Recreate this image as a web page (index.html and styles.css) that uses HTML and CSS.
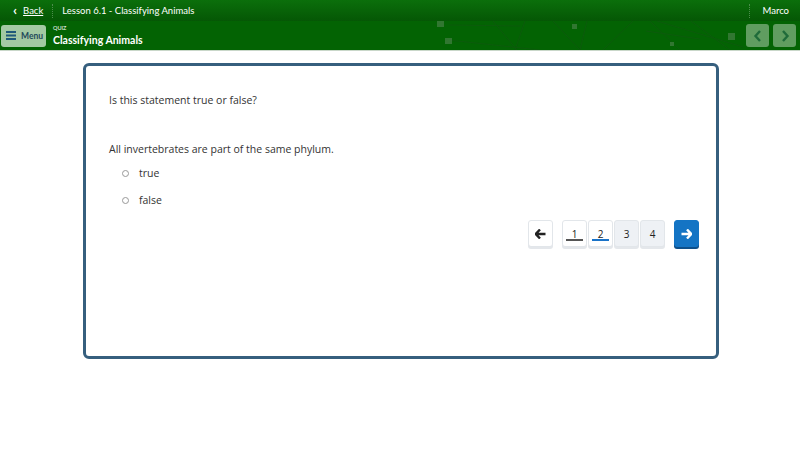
FILE: index.html
```html
<!DOCTYPE html>
<html>
<head>
<meta charset="utf-8">
<link rel="stylesheet" href="styles.css">
</head>
<body>
<header class="topbar">
  <a class="back" href="#"><span class="chev">&#8249;</span><span class="back-text">Back</span></a>
  <span class="sep"></span>
  <span class="lesson">Lesson 6.1 - Classifying Animals</span>
  <span class="spacer"></span>
  <span class="sep"></span>
  <span class="user">Marco</span>
</header>
<div class="subbar">
  <svg class="bg-lines" width="800" height="29" viewBox="0 0 800 29">
    <g stroke="#0f5a0f" stroke-width="1" fill="none" opacity="0.8">
      <path d="M493 0 L517 29"/><path d="M525 0 L515 29"/><path d="M553 0 L580 29"/>
      <path d="M587 0 L580 29"/><path d="M633 0 L603 29"/><path d="M650 0 L680 29"/>
      <path d="M646 10 L700 18"/><path d="M657 0 L743 26"/><path d="M691 0 L730 29"/>
      <path d="M448 19 L540 29"/><path d="M450 4 L520 5"/>
    </g>
    <g fill="#3d7d3d" opacity="0.8">
      <rect x="437" y="0" width="7" height="6"/><rect x="445" y="17" width="7" height="6"/>
      <rect x="572" y="3" width="5" height="5"/><rect x="728" y="12" width="7" height="7"/>
      <rect x="670" y="21" width="4" height="4"/>
    </g>
  </svg>
  <button class="menu-btn"><svg width="10" height="9" viewBox="0 0 10 9"><rect x="0" y="0" width="10" height="2" fill="#1f5a7a"/><rect x="0" y="3.5" width="10" height="2" fill="#1f5a7a"/><rect x="0" y="7" width="10" height="2" fill="#1f5a7a"/></svg><span>Menu</span></button>
  <div class="title-block">
    <div class="quiz-label">QUIZ</div>
    <div class="quiz-title">Classifying Animals</div>
  </div>
  <span class="spacer"></span>
  <div class="navs">
    <button class="nav-btn"><svg width="10" height="12" viewBox="0 0 10 12"><path d="M7 1 L2.5 6 L7 11" stroke="#1f6b3a" stroke-width="2.4" fill="none"/></svg></button>
    <button class="nav-btn"><svg width="10" height="12" viewBox="0 0 10 12"><path d="M3 1 L7.5 6 L3 11" stroke="#1f6b3a" stroke-width="2.4" fill="none"/></svg></button>
  </div>
</div>
<main class="content">
  <section class="card">
    <p class="question">Is this statement true or false?</p>
    <p class="statement">All invertebrates are part of the same phylum.</p>
    <ul class="options">
      <li><span class="radio"></span>true</li>
      <li><span class="radio"></span>false</li>
    </ul>
    <div class="pager">
      <button class="pbtn arrow"><svg width="11" height="10" viewBox="0 0 11 10"><path d="M5 0.5 L0.8 5 L5 9.5 M1.2 5 L10.5 5" stroke="#222" stroke-width="2.4" fill="none"/></svg></button>
      <div class="pages">
        <button class="pbtn page done">1</button>
        <button class="pbtn page current">2</button>
        <button class="pbtn page">3</button>
        <button class="pbtn page">4</button>
      </div>
      <button class="pbtn next"><svg width="11" height="10" viewBox="0 0 11 10"><path d="M6 0.5 L10.2 5 L6 9.5 M9.8 5 L0.5 5" stroke="#fff" stroke-width="2.4" fill="none"/></svg></button>
    </div>
  </section>
</main>
</body>
</html>
```
FILE: styles.css
```css
* { box-sizing: border-box; }
html, body { margin: 0; padding: 0; }
body {
  width: 800px; height: 450px; background: #fff; overflow: hidden;
  font-family: "Lato", "Noto Sans", sans-serif; color: #333;
}
button { font-family: inherit; cursor: pointer; }
.topbar {
  height: 21px; display: flex; align-items: center;
  background: linear-gradient(#0b6f0b, #055705);
  color: #fff; font-size: 9.5px;
}
.back { display: flex; align-items: center; color: #fff; margin-left: 13px; text-decoration: none; }
.chev { font-size: 14px; font-weight: 700; margin-right: 6px; line-height: 1; margin-top: -2px; }
.back-text { text-decoration: underline; }
.sep { width: 0; height: 14px; border-left: 1px dotted #4c8d4c; margin: 0 9px; }
.spacer { flex: 1; }
.user { margin-right: 11px; margin-left: 3px; }
.subbar {
  position: relative; height: 30px; background: #036303;
  display: flex; align-items: center; border-bottom: 1px solid #c9d7c9;
}
.bg-lines { position: absolute; left: 0; top: 0; }
.menu-btn {
  position: relative; display: flex; align-items: center; gap: 5px;
  margin-left: 1px; width: 45px; height: 22px; padding: 0 0 0 5px;
  background: #a3c9a3; border: none; border-radius: 3px;
  font-size: 8.5px; font-weight: 700; color: #1f4a5a;
}
.title-block { position: relative; margin-left: 7px; color: #fff; line-height: 1; }
.quiz-label { font-size: 5.5px; margin-bottom: 3px; }
.quiz-title { font-size: 10.5px; font-weight: 700; }
.navs { position: relative; display: flex; gap: 4px; margin-right: 4px; }
.nav-btn {
  width: 23px; height: 23px; border: none; border-radius: 3px;
  background: rgba(190, 215, 190, 0.5); display: flex; align-items: center; justify-content: center; padding: 0;
}
.content { padding: 12px 0 0 83px; }
.card {
  width: 636px; height: 296px; border: 3px solid #365f7e; border-radius: 6px;
  padding: 27px 17px 0 23px; font-family: "Open Sans", "Noto Sans", sans-serif;
  font-size: 10.5px; line-height: 14px; color: #333;
}
.question { margin: 0 0 35px 0; }
.statement { margin: 0 0 3.5px 0; }
.options { list-style: none; margin: 0; padding: 0 0 0 13px; }
.options li { display: flex; align-items: center; height: 27px; }
.radio {
  width: 7px; height: 7px; border: 1px solid #999; border-radius: 50%; margin-right: 10px;
}
.pager { display: flex; justify-content: flex-end; align-items: center; margin-top: 6.5px; gap: 9px; }
.pages { display: flex; gap: 1px; }
.pbtn {
  width: 25px; height: 27px; border: 1px solid #e2e6ea; border-radius: 3px;
  background: #fff; display: flex; align-items: center; justify-content: center; padding: 0;
  font-size: 10px; color: #222; box-shadow: 0 2px 0 #e4e7eb;
}
.page { position: relative; background: #eef1f5; }
.page.done, .page.current { background: #fff; }
.page.done::after, .page.current::after {
  content: ""; position: absolute; left: 3px; right: 3px; bottom: 5px; height: 2px; background: #555;
}
.page.current::after { background: #1a73c8; }
.next { background: #1474c4; border-color: #1474c4; box-shadow: 0 2px 0 #0d4f8a; }
```
